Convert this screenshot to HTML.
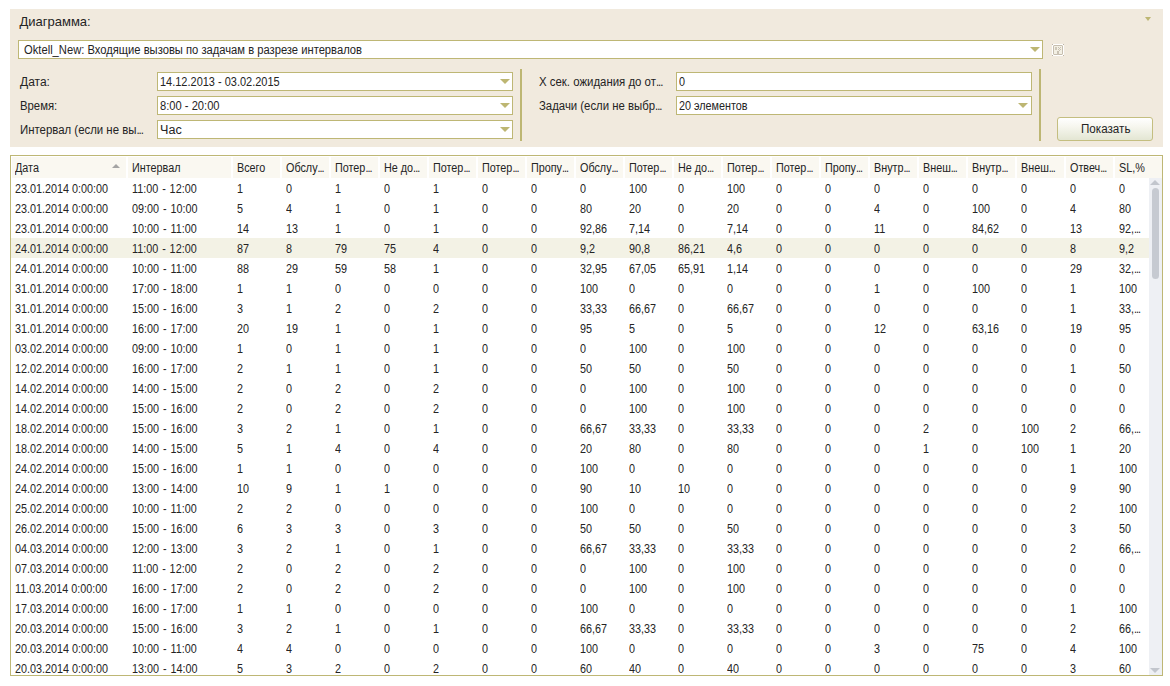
<!DOCTYPE html>
<html><head><meta charset="utf-8"><style>
*{margin:0;padding:0;box-sizing:border-box}
html,body{width:1170px;height:686px;overflow:hidden;background:#fff;font-family:"Liberation Sans",sans-serif;font-size:12px;color:#242424}
.a{position:absolute}
#panel{position:absolute;left:10px;top:9px;width:1153px;height:138px;background:#f1eade}
.t{position:absolute;white-space:nowrap;line-height:20px;height:20px;transform:scaleX(.9);transform-origin:0 0}
.box{position:absolute;background:#fff;border:1px solid #beb775;height:19px}
.arr{position:absolute;width:0;height:0;border-left:5px solid transparent;border-right:5px solid transparent;border-top:5.5px solid #bdb672;margin-left:-0.5px}
.sep{position:absolute;width:2px;background:#bdb673;top:69px;height:72px}
#btn{position:absolute;left:1057px;top:117px;width:96px;height:24px;border:1px solid #c4be80;border-radius:3px;background:linear-gradient(#ffffff,#f6f6ee 40%,#e3e6d3)}
#grid{position:absolute;left:10px;top:155px;width:1153px;height:521px;border:1px solid #beb775;overflow:hidden;background:#fff}
#hdr{position:absolute;left:0;top:1px;height:21px;width:1151px}
.hc{position:absolute;top:0;height:21px;background:#faf8f1;overflow:hidden}
.hc span{position:absolute;top:1px;left:3.5px;white-space:nowrap;line-height:20px;transform:scaleX(.9);transform-origin:0 0}
.r{position:absolute;left:0;width:1138px;height:20px;line-height:20px;white-space:nowrap}
.r.sel{background:#f3f2e5}
.r i{font-style:normal;position:absolute;top:1px;transform:scaleX(.9);transform-origin:0 0}
u{text-decoration:none;letter-spacing:-1.1px}
#vs{position:absolute;left:1138px;top:22px;width:13px;height:497px;background:#eef0f4}
#vsth{position:absolute;left:3px;top:10px;width:7px;height:91px;background:#c6cad1;border-radius:3.5px}
#vsup{position:absolute;left:1px;top:1.6px;width:0;height:0;border-left:5.1px solid transparent;border-right:5.1px solid transparent;border-bottom:5px solid #c2c6cd}
#vsdn{position:absolute;left:1px;bottom:1.6px;width:0;height:0;border-left:5.1px solid transparent;border-right:5.1px solid transparent;border-top:5px solid #c2c6cd}
.r i:nth-child(2){word-spacing:1px}
.hc:first-child span{left:2.5px}
#sort{position:absolute;left:100.3px;top:7px;width:0;height:0;border-left:4.3px solid transparent;border-right:4.3px solid transparent;border-bottom:4.5px solid #a4a4a4}
.r i:nth-child(1){left:3.5px}
.r i:nth-child(2){left:120.5px}
.r i:nth-child(3){left:225.5px}
.r i:nth-child(4){left:274.5px}
.r i:nth-child(5){left:323.5px}
.r i:nth-child(6){left:372.5px}
.r i:nth-child(7){left:421.5px}
.r i:nth-child(8){left:470.5px}
.r i:nth-child(9){left:519.5px}
.r i:nth-child(10){left:568.5px}
.r i:nth-child(11){left:617.5px}
.r i:nth-child(12){left:666.5px}
.r i:nth-child(13){left:715.5px}
.r i:nth-child(14){left:764.5px}
.r i:nth-child(15){left:813.5px}
.r i:nth-child(16){left:862.5px}
.r i:nth-child(17){left:911.5px}
.r i:nth-child(18){left:960.5px}
.r i:nth-child(19){left:1009.5px}
.r i:nth-child(20){left:1058.5px}
.r i:nth-child(21){left:1107.5px}

</style></head><body>
<div id="panel"></div>
<div class="t" style="left:19.5px;top:12px;font-size:13px;transform:none">Диаграмма:</div>
<div class="arr" style="left:1144.6px;top:17px;margin:0;border-left-width:3.8px;border-right-width:3.8px;border-top-width:4.5px"></div>
<div class="box" style="left:18px;top:40px;width:1025px"></div>
<div class="t" style="left:23.5px;top:40px;transform:scaleX(.933)">Oktell_New: Входящие вызовы по задачам в разрезе интервалов</div>
<div class="arr" style="left:1030px;top:47px"></div>
<svg class="a" style="left:1052px;top:44px" width="12" height="12" viewBox="0 0 12 12" shape-rendering="crispEdges"><rect x="0" y="0" width="12" height="12" fill="#fff"/><rect x="1" y="1" width="10" height="10" fill="#c6beb0"/><rect x="2" y="2" width="8" height="8" fill="#f3f0e4"/><rect x="1" y="1" width="1" height="1" fill="#e6e0d4"/><rect x="10" y="1" width="1" height="1" fill="#e6e0d4"/><rect x="1" y="10" width="1" height="1" fill="#e6e0d4"/><rect x="10" y="10" width="1" height="1" fill="#e6e0d4"/><rect x="3" y="3" width="2" height="3" fill="#cfc8b9"/><rect x="6" y="3" width="1" height="1" fill="#c9c1b3"/><rect x="8" y="3" width="1" height="1" fill="#c9c1b3"/><rect x="7" y="4" width="1" height="1" fill="#c9c1b3"/><rect x="6" y="5" width="1" height="1" fill="#c9c1b3"/><rect x="8" y="5" width="1" height="1" fill="#c9c1b3"/><rect x="7" y="6" width="1" height="1" fill="#c9c1b3"/><rect x="5" y="7" width="2" height="1" fill="#c9c1b3"/><rect x="5" y="8" width="2" height="3" fill="#cbc3b5"/><rect x="0" y="0" width="1" height="1" fill="#bdb5a7"/><rect x="11" y="0" width="1" height="1" fill="#bdb5a7"/><rect x="0" y="11" width="1" height="1" fill="#bdb5a7"/><rect x="11" y="11" width="1" height="1" fill="#bdb5a7"/></svg>
<div class="t" style="left:20px;top:72px;transform:none">Дата:</div>
<div class="t" style="left:20px;top:96px;transform:scaleX(.944)">Время:</div>
<div class="t" style="left:19.5px;top:120px;transform:scaleX(.95)">Интервал (если не вы<u>...</u></div>
<div class="box" style="left:157px;top:72px;width:356px"></div>
<div class="t" style="left:160px;top:72px;transform:scaleX(.915)">14.12.2013 - 03.02.2015</div>
<div class="arr" style="left:500px;top:79px"></div>
<div class="box" style="left:157px;top:96px;width:356px"></div>
<div class="t" style="left:160px;top:96px;transform:scaleX(.93)">8:00 - 20:00</div>
<div class="arr" style="left:500px;top:103px"></div>
<div class="box" style="left:157px;top:120px;width:356px"></div>
<div class="t" style="left:159.5px;top:120px;transform:scaleX(1.05)">Час</div>
<div class="arr" style="left:500px;top:127px"></div>
<div class="sep" style="left:520px"></div>
<div class="t" style="left:539px;top:72px;transform:scaleX(.951)">X сек. ожидания до от<u>...</u></div>
<div class="t" style="left:539px;top:96px;transform:scaleX(.947)">Задачи (если не выбр<u>...</u></div>
<div class="box" style="left:676px;top:72px;width:356px"></div>
<div class="t" style="left:679px;top:72px">0</div>
<div class="box" style="left:676px;top:96px;width:356px"></div>
<div class="t" style="left:679px;top:96px">20 элементов</div>
<div class="arr" style="left:1018px;top:103px"></div>
<div class="sep" style="left:1039px"></div>
<div id="btn"></div>
<div class="t" style="left:1080.7px;top:119px;transform:scaleX(.97)">Показать</div>

<div id="grid">
<div id="hdr">
<div class="hc" style="left:1px;width:114px"><span>Дата</span><div id="sort"></div></div>
<div class="hc" style="left:117px;width:103px"><span>Интервал</span></div>
<div class="hc" style="left:222px;width:47px"><span>Всего</span></div>
<div class="hc" style="left:271px;width:47px"><span>Обслу<u>...</u></span></div>
<div class="hc" style="left:320px;width:47px"><span>Потер<u>...</u></span></div>
<div class="hc" style="left:369px;width:47px"><span>Не до<u>...</u></span></div>
<div class="hc" style="left:418px;width:47px"><span>Потер<u>...</u></span></div>
<div class="hc" style="left:467px;width:47px"><span>Потер<u>...</u></span></div>
<div class="hc" style="left:516px;width:47px"><span>Пропу<u>...</u></span></div>
<div class="hc" style="left:565px;width:47px"><span>Обслу<u>...</u></span></div>
<div class="hc" style="left:614px;width:47px"><span>Потер<u>...</u></span></div>
<div class="hc" style="left:663px;width:47px"><span>Не до<u>...</u></span></div>
<div class="hc" style="left:712px;width:47px"><span>Потер<u>...</u></span></div>
<div class="hc" style="left:761px;width:47px"><span>Потер<u>...</u></span></div>
<div class="hc" style="left:810px;width:47px"><span>Пропу<u>...</u></span></div>
<div class="hc" style="left:859px;width:47px"><span>Внутр<u>...</u></span></div>
<div class="hc" style="left:908px;width:47px"><span>Внеш<u>...</u></span></div>
<div class="hc" style="left:957px;width:47px"><span>Внутр<u>...</u></span></div>
<div class="hc" style="left:1006px;width:47px"><span>Внеш<u>...</u></span></div>
<div class="hc" style="left:1055px;width:47px"><span>Отвеч<u>...</u></span></div>
<div class="hc" style="left:1104px;width:47px"><span>SL,%</span></div>
</div>
<div class="r" style="top:22px"><i>23.01.2014 0:00:00</i><i>11:00 - 12:00</i><i>1</i><i>0</i><i>1</i><i>0</i><i>1</i><i>0</i><i>0</i><i>0</i><i>100</i><i>0</i><i>100</i><i>0</i><i>0</i><i>0</i><i>0</i><i>0</i><i>0</i><i>0</i><i>0</i></div>
<div class="r" style="top:42px"><i>23.01.2014 0:00:00</i><i>09:00 - 10:00</i><i>5</i><i>4</i><i>1</i><i>0</i><i>1</i><i>0</i><i>0</i><i>80</i><i>20</i><i>0</i><i>20</i><i>0</i><i>0</i><i>4</i><i>0</i><i>100</i><i>0</i><i>4</i><i>80</i></div>
<div class="r" style="top:62px"><i>23.01.2014 0:00:00</i><i>10:00 - 11:00</i><i>14</i><i>13</i><i>1</i><i>0</i><i>1</i><i>0</i><i>0</i><i>92,86</i><i>7,14</i><i>0</i><i>7,14</i><i>0</i><i>0</i><i>11</i><i>0</i><i>84,62</i><i>0</i><i>13</i><i>92,<u>...</u></i></div>
<div class="r sel" style="top:82px"><i>24.01.2014 0:00:00</i><i>11:00 - 12:00</i><i>87</i><i>8</i><i>79</i><i>75</i><i>4</i><i>0</i><i>0</i><i>9,2</i><i>90,8</i><i>86,21</i><i>4,6</i><i>0</i><i>0</i><i>0</i><i>0</i><i>0</i><i>0</i><i>8</i><i>9,2</i></div>
<div class="r" style="top:102px"><i>24.01.2014 0:00:00</i><i>10:00 - 11:00</i><i>88</i><i>29</i><i>59</i><i>58</i><i>1</i><i>0</i><i>0</i><i>32,95</i><i>67,05</i><i>65,91</i><i>1,14</i><i>0</i><i>0</i><i>0</i><i>0</i><i>0</i><i>0</i><i>29</i><i>32,<u>...</u></i></div>
<div class="r" style="top:122px"><i>31.01.2014 0:00:00</i><i>17:00 - 18:00</i><i>1</i><i>1</i><i>0</i><i>0</i><i>0</i><i>0</i><i>0</i><i>100</i><i>0</i><i>0</i><i>0</i><i>0</i><i>0</i><i>1</i><i>0</i><i>100</i><i>0</i><i>1</i><i>100</i></div>
<div class="r" style="top:142px"><i>31.01.2014 0:00:00</i><i>15:00 - 16:00</i><i>3</i><i>1</i><i>2</i><i>0</i><i>2</i><i>0</i><i>0</i><i>33,33</i><i>66,67</i><i>0</i><i>66,67</i><i>0</i><i>0</i><i>0</i><i>0</i><i>0</i><i>0</i><i>1</i><i>33,<u>...</u></i></div>
<div class="r" style="top:162px"><i>31.01.2014 0:00:00</i><i>16:00 - 17:00</i><i>20</i><i>19</i><i>1</i><i>0</i><i>1</i><i>0</i><i>0</i><i>95</i><i>5</i><i>0</i><i>5</i><i>0</i><i>0</i><i>12</i><i>0</i><i>63,16</i><i>0</i><i>19</i><i>95</i></div>
<div class="r" style="top:182px"><i>03.02.2014 0:00:00</i><i>09:00 - 10:00</i><i>1</i><i>0</i><i>1</i><i>0</i><i>1</i><i>0</i><i>0</i><i>0</i><i>100</i><i>0</i><i>100</i><i>0</i><i>0</i><i>0</i><i>0</i><i>0</i><i>0</i><i>0</i><i>0</i></div>
<div class="r" style="top:202px"><i>12.02.2014 0:00:00</i><i>16:00 - 17:00</i><i>2</i><i>1</i><i>1</i><i>0</i><i>1</i><i>0</i><i>0</i><i>50</i><i>50</i><i>0</i><i>50</i><i>0</i><i>0</i><i>0</i><i>0</i><i>0</i><i>0</i><i>1</i><i>50</i></div>
<div class="r" style="top:222px"><i>14.02.2014 0:00:00</i><i>14:00 - 15:00</i><i>2</i><i>0</i><i>2</i><i>0</i><i>2</i><i>0</i><i>0</i><i>0</i><i>100</i><i>0</i><i>100</i><i>0</i><i>0</i><i>0</i><i>0</i><i>0</i><i>0</i><i>0</i><i>0</i></div>
<div class="r" style="top:242px"><i>14.02.2014 0:00:00</i><i>15:00 - 16:00</i><i>2</i><i>0</i><i>2</i><i>0</i><i>2</i><i>0</i><i>0</i><i>0</i><i>100</i><i>0</i><i>100</i><i>0</i><i>0</i><i>0</i><i>0</i><i>0</i><i>0</i><i>0</i><i>0</i></div>
<div class="r" style="top:262px"><i>18.02.2014 0:00:00</i><i>15:00 - 16:00</i><i>3</i><i>2</i><i>1</i><i>0</i><i>1</i><i>0</i><i>0</i><i>66,67</i><i>33,33</i><i>0</i><i>33,33</i><i>0</i><i>0</i><i>0</i><i>2</i><i>0</i><i>100</i><i>2</i><i>66,<u>...</u></i></div>
<div class="r" style="top:282px"><i>18.02.2014 0:00:00</i><i>14:00 - 15:00</i><i>5</i><i>1</i><i>4</i><i>0</i><i>4</i><i>0</i><i>0</i><i>20</i><i>80</i><i>0</i><i>80</i><i>0</i><i>0</i><i>0</i><i>1</i><i>0</i><i>100</i><i>1</i><i>20</i></div>
<div class="r" style="top:302px"><i>24.02.2014 0:00:00</i><i>15:00 - 16:00</i><i>1</i><i>1</i><i>0</i><i>0</i><i>0</i><i>0</i><i>0</i><i>100</i><i>0</i><i>0</i><i>0</i><i>0</i><i>0</i><i>0</i><i>0</i><i>0</i><i>0</i><i>1</i><i>100</i></div>
<div class="r" style="top:322px"><i>24.02.2014 0:00:00</i><i>13:00 - 14:00</i><i>10</i><i>9</i><i>1</i><i>1</i><i>0</i><i>0</i><i>0</i><i>90</i><i>10</i><i>10</i><i>0</i><i>0</i><i>0</i><i>0</i><i>0</i><i>0</i><i>0</i><i>9</i><i>90</i></div>
<div class="r" style="top:342px"><i>25.02.2014 0:00:00</i><i>10:00 - 11:00</i><i>2</i><i>2</i><i>0</i><i>0</i><i>0</i><i>0</i><i>0</i><i>100</i><i>0</i><i>0</i><i>0</i><i>0</i><i>0</i><i>0</i><i>0</i><i>0</i><i>0</i><i>2</i><i>100</i></div>
<div class="r" style="top:362px"><i>26.02.2014 0:00:00</i><i>15:00 - 16:00</i><i>6</i><i>3</i><i>3</i><i>0</i><i>3</i><i>0</i><i>0</i><i>50</i><i>50</i><i>0</i><i>50</i><i>0</i><i>0</i><i>0</i><i>0</i><i>0</i><i>0</i><i>3</i><i>50</i></div>
<div class="r" style="top:382px"><i>04.03.2014 0:00:00</i><i>12:00 - 13:00</i><i>3</i><i>2</i><i>1</i><i>0</i><i>1</i><i>0</i><i>0</i><i>66,67</i><i>33,33</i><i>0</i><i>33,33</i><i>0</i><i>0</i><i>0</i><i>0</i><i>0</i><i>0</i><i>2</i><i>66,<u>...</u></i></div>
<div class="r" style="top:402px"><i>07.03.2014 0:00:00</i><i>11:00 - 12:00</i><i>2</i><i>0</i><i>2</i><i>0</i><i>2</i><i>0</i><i>0</i><i>0</i><i>100</i><i>0</i><i>100</i><i>0</i><i>0</i><i>0</i><i>0</i><i>0</i><i>0</i><i>0</i><i>0</i></div>
<div class="r" style="top:422px"><i>11.03.2014 0:00:00</i><i>16:00 - 17:00</i><i>2</i><i>0</i><i>2</i><i>0</i><i>2</i><i>0</i><i>0</i><i>0</i><i>100</i><i>0</i><i>100</i><i>0</i><i>0</i><i>0</i><i>0</i><i>0</i><i>0</i><i>0</i><i>0</i></div>
<div class="r" style="top:442px"><i>17.03.2014 0:00:00</i><i>16:00 - 17:00</i><i>1</i><i>1</i><i>0</i><i>0</i><i>0</i><i>0</i><i>0</i><i>100</i><i>0</i><i>0</i><i>0</i><i>0</i><i>0</i><i>0</i><i>0</i><i>0</i><i>0</i><i>1</i><i>100</i></div>
<div class="r" style="top:462px"><i>20.03.2014 0:00:00</i><i>15:00 - 16:00</i><i>3</i><i>2</i><i>1</i><i>0</i><i>1</i><i>0</i><i>0</i><i>66,67</i><i>33,33</i><i>0</i><i>33,33</i><i>0</i><i>0</i><i>0</i><i>0</i><i>0</i><i>0</i><i>2</i><i>66,<u>...</u></i></div>
<div class="r" style="top:482px"><i>20.03.2014 0:00:00</i><i>10:00 - 11:00</i><i>4</i><i>4</i><i>0</i><i>0</i><i>0</i><i>0</i><i>0</i><i>100</i><i>0</i><i>0</i><i>0</i><i>0</i><i>0</i><i>3</i><i>0</i><i>75</i><i>0</i><i>4</i><i>100</i></div>
<div class="r" style="top:502px"><i>20.03.2014 0:00:00</i><i>13:00 - 14:00</i><i>5</i><i>3</i><i>2</i><i>0</i><i>2</i><i>0</i><i>0</i><i>60</i><i>40</i><i>0</i><i>40</i><i>0</i><i>0</i><i>0</i><i>0</i><i>0</i><i>0</i><i>3</i><i>60</i></div>
<div id="vs"><div id="vsup"></div><div id="vsth"></div><div id="vsdn"></div></div>
</div>
</body></html>
